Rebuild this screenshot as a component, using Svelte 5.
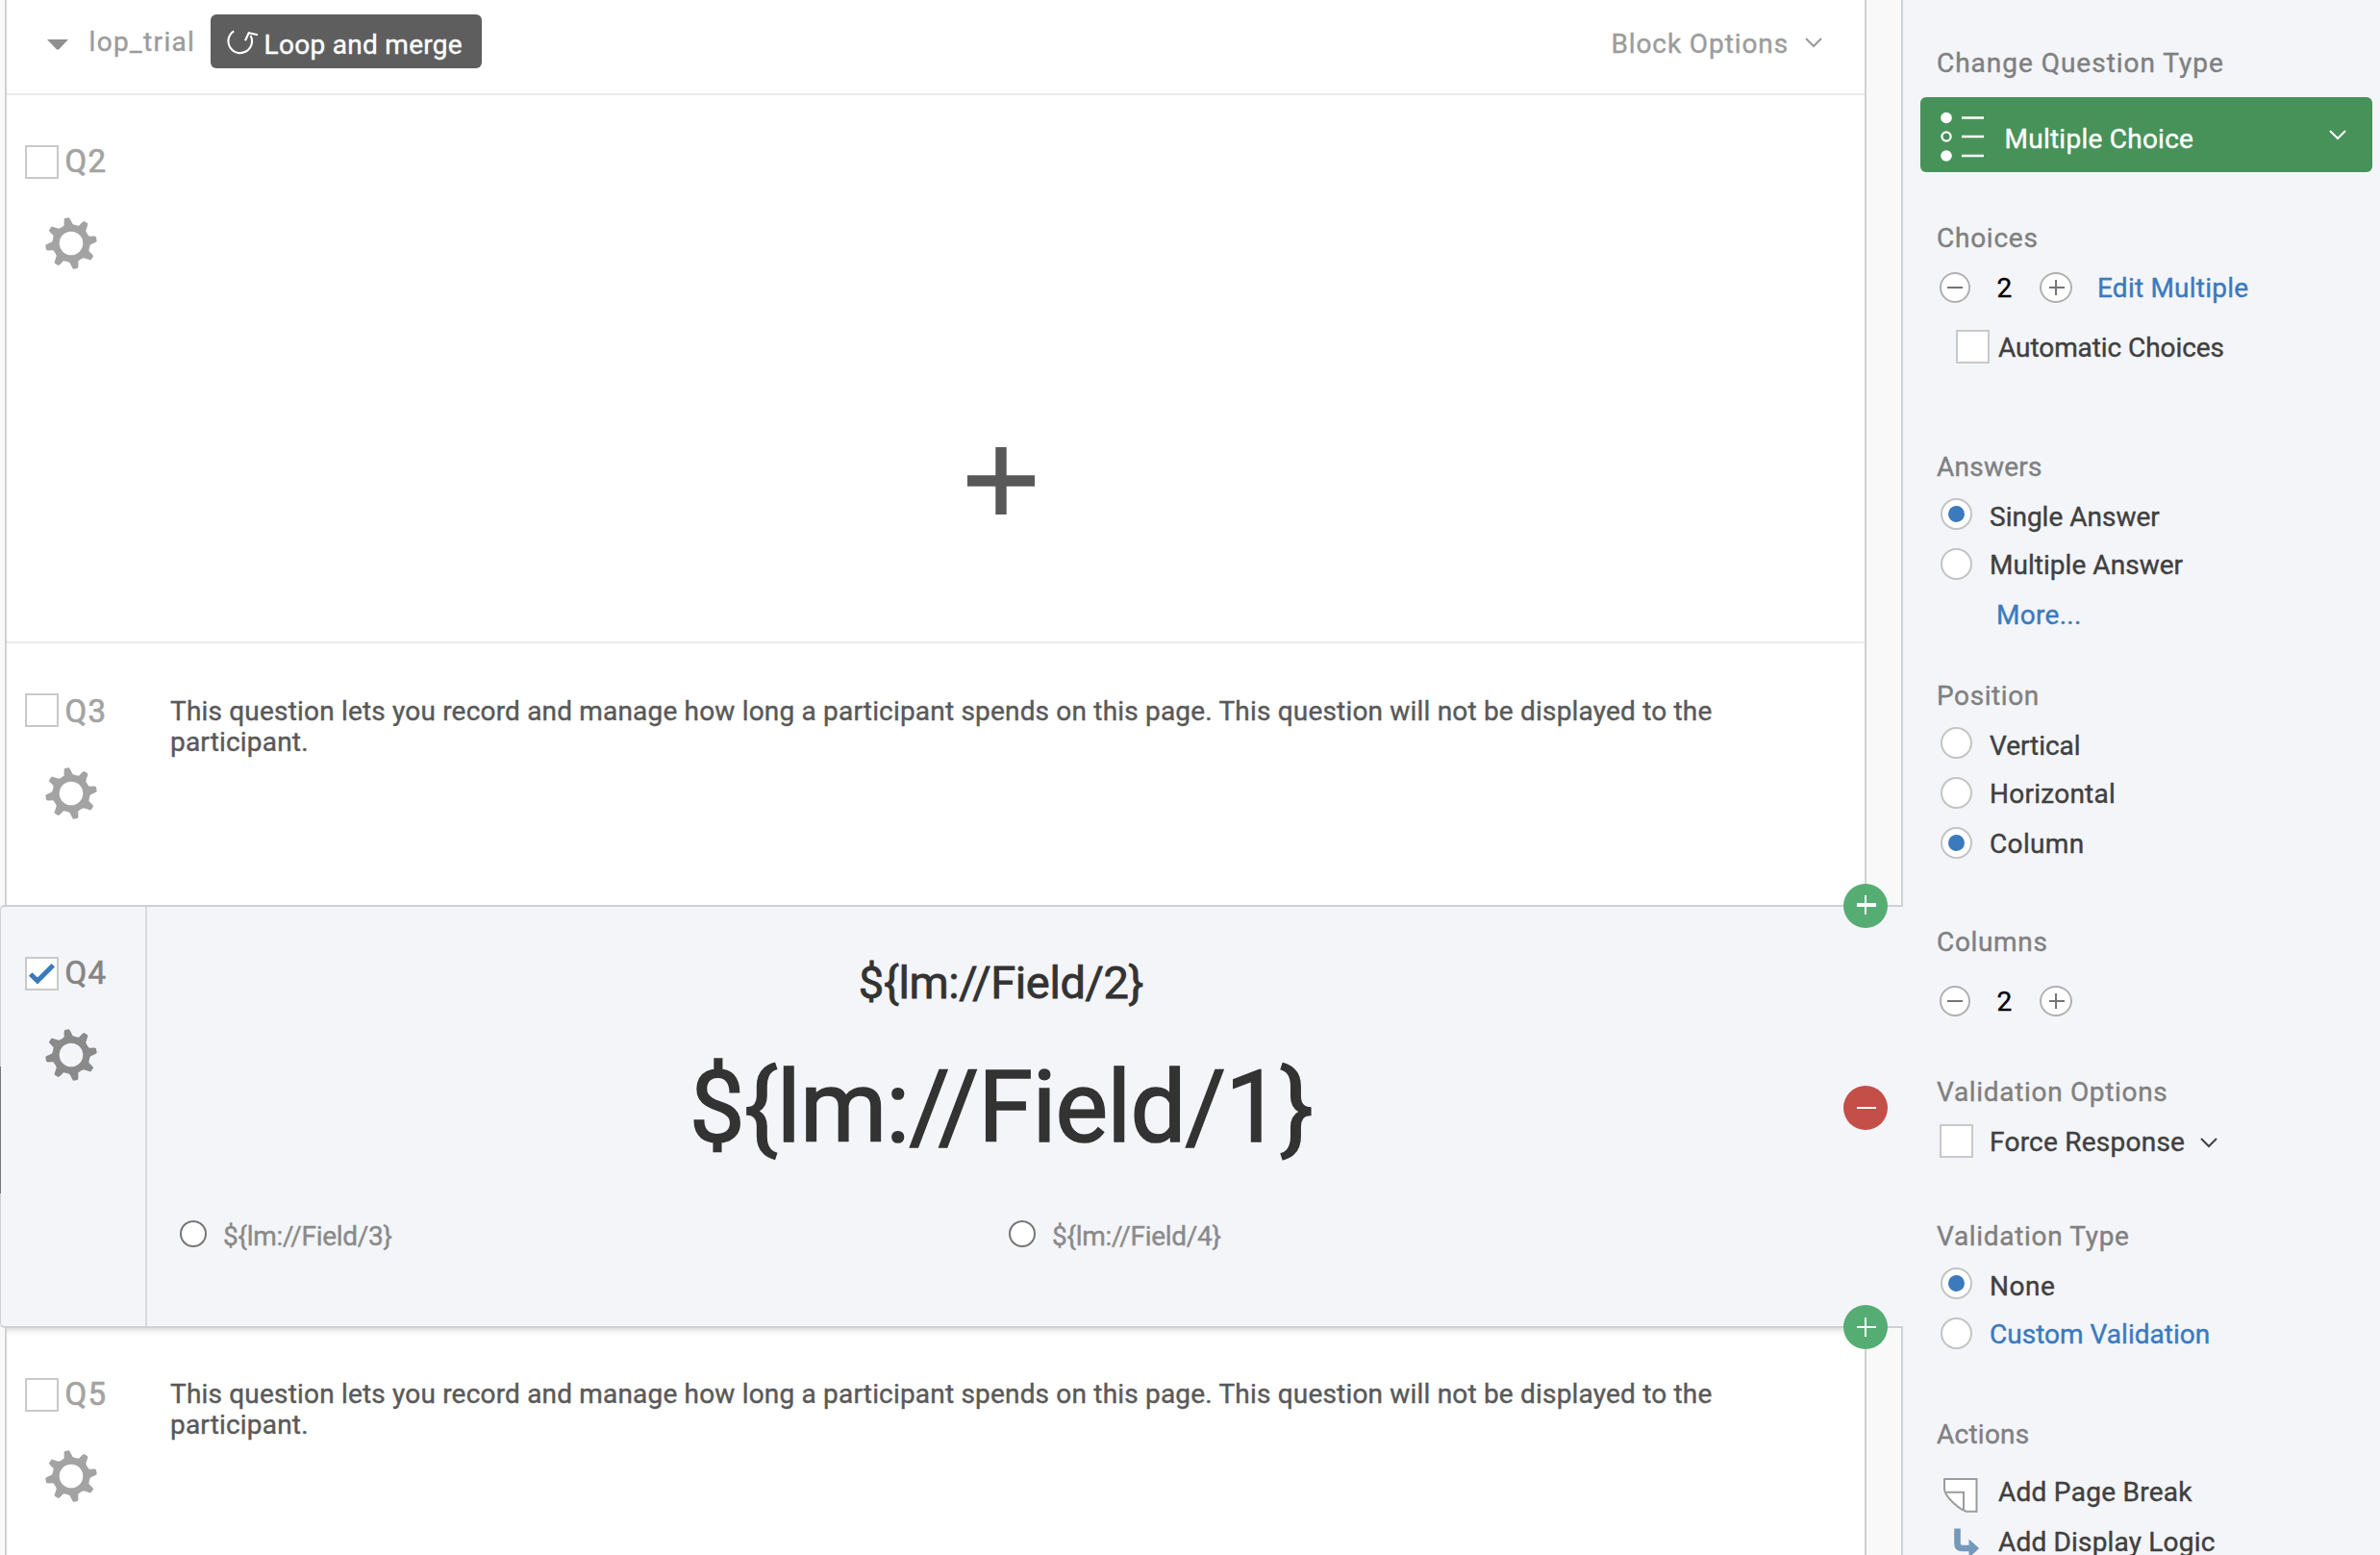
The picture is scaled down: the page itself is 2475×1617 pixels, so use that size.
<script>
  const timing =
    'This question lets you record and manage how long a participant spends on this page. This question will not be displayed to the participant.';

  const field = (n) => '${lm://Field/' + n + '}';

  // Eight-toothed cog outline, centred on the origin.
  function cog(outer, root) {
    const pts = [];
    const at = (r, deg) => {
      const a = ((deg - 90) * Math.PI) / 180;
      pts.push(`${(r * Math.cos(a)).toFixed(2)} ${(r * Math.sin(a)).toFixed(2)}`);
    };
    for (let i = 0; i < 8; i++) {
      const mid = -9.5 + i * 45;
      at(root, mid - 12);
      at(outer - 1.5, mid - 7.5);
      at(outer, mid - 5);
      at(outer, mid + 5);
      at(outer - 1.5, mid + 7);
      at(root, mid + 14);
      at(root - 0.6, mid + 22);
    }
    return `M${pts.join('L')}Z`;
  }
  const cogPath = cog(26.8, 20) + 'M12.3 0A12.3 12.3 0 1 0 -12.3 0A12.3 12.3 0 1 0 12.3 0Z';

  const answers = [
    { label: 'Single Answer', on: true, track: 0 },
    { label: 'Multiple Answer', on: false, track: 0.04 }
  ];
  const positions = [
    { label: 'Vertical', on: false, track: -0.05 },
    { label: 'Horizontal', on: false, track: 0.25 },
    { label: 'Column', on: true, track: 0.35 }
  ];
  const validation = [
    { label: 'None', on: true, track: 0.5 },
    { label: 'Custom Validation', on: false, track: 0.02, link: true }
  ];
</script>

{#snippet check(on)}
  <span class="check">
    {#if on}
      <svg width="31" height="31" viewBox="2 2 31 31"><path d="M5.7 18L13 25L29.3 8.7" fill="none" stroke="#3a7abd" stroke-width="5" /></svg>
    {/if}
  </span>
{/snippet}

{#snippet side(id, on)}
  <div class="side">
    <div class="pick">{@render check(on)}<span class="qid">{id}</span></div>
    <svg class="cog" width="54" height="54" viewBox="-27 -27 54 54"><path d={cogPath} fill-rule="evenodd" /></svg>
  </div>
{/snippet}

{#snippet chevron(color)}
  <svg class="chevron" width="18" height="11" viewBox="0 0 18 11"><path d="M1 1L9 9L17 1" fill="none" stroke={color} stroke-width="2" /></svg>
{/snippet}

{#snippet heading(text, track)}
  <h3 style:letter-spacing="{track}px">{text}</h3>
{/snippet}

{#snippet radios(items)}
  <div class="radios">
    {#each items as item}
      <label class="radio-row">
        <span class="radio" class:on={item.on}></span>
        <span class="radio-label" class:link={item.link} style:letter-spacing="{item.track}px">{item.label}</span>
      </label>
    {/each}
  </div>
{/snippet}

{#snippet stepper()}
  <span class="step minus"><svg width="16" height="16" viewBox="0 0 16 16"><path d="M0 7H16" stroke="#757575" stroke-width="2" /></svg></span>
  <span class="count">2</span>
  <span class="step plus"><svg width="16" height="16" viewBox="0 0 16 16"><path d="M0 7H16M7 -1V15" stroke="#757575" stroke-width="2" /></svg></span>
{/snippet}

<div class="page">
  <main>
    <div class="row head-row">
      <header class="sheet">
        <svg class="tri" width="22" height="11" viewBox="0 0 22 11"><path d="M0 0H22L12.5 10Q11 11 9.5 10Z" fill="#8f8f8f" /></svg>
        <span class="block-name">lop_trial</span>
        <button class="loop">
          <svg width="36" height="32" viewBox="0 0 36 32"><path d="M9.3 4.3A12.3 12.3 0 1 0 26.6 9M21 14.3L24.7 6.3L34 8.2" fill="none" stroke="#fff" stroke-width="2.1" /></svg>
          <span>Loop and merge</span>
        </button>
        <span class="options">Block Options</span>
        {@render chevron('#999')}
      </header>
    </div>

    <div class="row q2">
      <section class="sheet lined">
        {@render side('Q2', false)}
        <div class="fixation">
          <svg width="70" height="70" viewBox="0 0 70 70"><path d="M0 35H70M35 0V70" stroke="#585858" stroke-width="11.4" /></svg>
        </div>
      </section>
    </div>

    <div class="row q3">
      <section class="sheet">
        {@render side('Q3', false)}
        <p>{timing}</p>
      </section>
    </div>

    <section class="selected">
      {@render side('Q4', true)}
      <div class="body">
        <div class="field-two">{field(2)}</div>
        <div class="field-one">{field(1)}</div>
        <div class="choices">
          {#each [3, 4] as n}
            <div class="choice"><span class="dot"></span>{field(n)}</div>
          {/each}
        </div>
      </div>
      <span class="scroll-mark"></span>
      <span class="badge add top"><svg width="20" height="20" viewBox="0 0 20 20"><path d="M0 9H20" stroke="#fff" stroke-width="4" /><path d="M9 -1V19" stroke="#fff" stroke-width="2" /></svg></span>
      <span class="badge remove"><svg width="20" height="20" viewBox="0 0 20 20"><path d="M0 10H20" stroke="#fff" stroke-width="2" /></svg></span>
      <span class="badge add bottom"><svg width="20" height="20" viewBox="0 0 20 20"><path d="M0 10H20M9 0V20" stroke="#fff" stroke-width="2" /></svg></span>
    </section>

    <div class="row q5">
      <section class="sheet">
        {@render side('Q5', false)}
        <p>{timing}</p>
      </section>
    </div>
  </main>

  <aside class="panel">
    {@render heading('Change Question Type', 0.98)}
    <button class="type">
      <svg width="40" height="54" viewBox="0 0 40 54">
        <circle cx="7" cy="7.5" r="5.8" fill="#fff" />
        <circle cx="7" cy="27" r="4.6" fill="none" stroke="#fff" stroke-width="2.2" />
        <circle cx="7" cy="47" r="5.8" fill="#fff" />
        <path d="M23 7.5H46M23 27H46M23 47H46" stroke="#fff" stroke-width="2.4" />
      </svg>
      <span>Multiple Choice</span>
      {@render chevron('#fff')}
    </button>

    <div class="group choices-group">
      {@render heading('Choices', 0.75)}
      <div class="steps">{@render stepper()}<a class="link" href="#edit">Edit Multiple</a></div>
      <div class="auto">{@render check(false)}<span>Automatic Choices</span></div>
    </div>

    <div class="group answers">
      {@render heading('Answers', 0.25)}
      {@render radios(answers)}
      <a class="link more" href="#more">More...</a>
    </div>

    <div class="group position">
      {@render heading('Position', 0.6)}
      {@render radios(positions)}
    </div>

    <div class="group columns">
      {@render heading('Columns', 0.67)}
      <div class="steps">{@render stepper()}</div>
    </div>

    <div class="group v-options">
      {@render heading('Validation Options', 0.68)}
      <div class="force">{@render check(false)}<span>Force Response</span>{@render chevron('#404040')}</div>
    </div>

    <div class="group v-type">
      {@render heading('Validation Type', 0.68)}
      {@render radios(validation)}
    </div>

    <div class="group actions">
      {@render heading('Actions', 0.25)}
      <div class="action">
        <svg width="36" height="36" viewBox="0 0 36 36"><path d="M1 1H34.5V34.7H24C16 32.5 1 19 1 11Z" fill="#fff" stroke="#9c9c9c" stroke-width="2" /><path d="M2.5 14.7H21V33.5" fill="none" stroke="#9c9c9c" stroke-width="2" /></svg>
        <span>Add Page Break</span>
      </div>
      <div class="action">
        <svg class="logic" width="28" height="32" viewBox="0 0 28 32"><path d="M4.5 .5V16Q4.5 21 9.5 21H18" fill="none" stroke="#7499bb" stroke-width="6.6" /><path d="M16.5 11.5L27.2 21L16.5 31Z" fill="#7499bb" /></svg>
        <span>Add Display Logic</span>
      </div>
    </div>
  </aside>
</div>

<style>
  :global(body) { margin: 0; overflow: hidden; }
  .page {
    display: grid;
    grid-template-columns: 1979px 1fr;
    width: 2475px;
    height: 1617px;
    overflow: hidden;
    font: 28px/33px Roboto, sans-serif;
    -webkit-text-stroke: 0.4px currentColor;
    color: #404040;
    background: #f4f5f9;
  }
  svg { display: block; flex: none; overflow: visible; }
  button { border: 0; font: inherit; color: #fff; padding: 0; }
  h3, p { margin: 0; font-weight: 400; }
  .link { color: #3a7abd; text-decoration: none; }

  main { display: flex; flex-direction: column; height: 1617px; }
  .row {
    box-sizing: border-box;
    flex: none;
    display: flex;
    padding-left: 5px;
    border-right: 2px solid #cdd0d5;
    background: #f9f9f9;
  }
  .sheet {
    box-sizing: border-box;
    display: flex;
    width: 1936px;
    border: solid #d1d1d1;
    border-width: 0 2px;
    background: #fff;
  }
  .head-row { height: 99px; }
  .head-row .sheet { padding: 0 44px 0 42px; box-shadow: inset 0 -2px #ebebeb; color: #9c9c9c; }
  .tri { margin-top: 41px; }
  .block-name { margin: 27px 0 0 21.5px; letter-spacing: 1.35px; width: 126.5px; }
  .loop {
    display: flex;
    box-sizing: border-box;
    width: 282px;
    height: 56px;
    margin-top: 15px;
    padding-left: 15px;
    border-radius: 6px;
    background: #5e5e5e;
    letter-spacing: 0.3px;
  }
  .loop svg { margin-top: 13px; }
  .loop span { margin: 15px 0 0 4.5px; }
  .options { margin: 29px 0 0 auto; letter-spacing: 0.9px; }
  .head-row .sheet :global(.chevron) { margin: 39px 0 0 17px; }

  .q2 { height: 570px; }
  .q3 { height: 272px; }
  .q5 { flex: 1; }
  .lined { box-shadow: inset 0 -2px #ebebeb; }
  .side { flex: none; width: 125px; padding: 50px 0 0 19px; }
  .q3 .side { padding-top: 52px; }
  .pick { display: flex; height: 38px; }
  .check {
    box-sizing: border-box;
    flex: none;
    width: 35px;
    height: 35px;
    border: 2px solid #c9c9c9;
    background: #fff;
  }
  .pick .check { margin-top: 2px; }
  .q3 .pick .check { margin-top: 0; }
  .qid { margin-left: 6.5px; font-size: 33px; line-height: 38px; letter-spacing: 1.4px; color: #a3a3a3; -webkit-text-stroke-width: 0.7px; }
  .cog { margin: 39px 0 0 20.5px; fill: #a3a3a3; }
  .fixation { display: flex; justify-content: center; width: 1776px; padding: 366px 0 0 2px; }
  .sheet p { margin: 55px 0 0 26px; width: 1625px; line-height: 32px; letter-spacing: 0.185px; color: #595959; }
  .q5 .sheet p { margin-top: 53px; }
  .q5 .sheet { box-shadow: inset 0 8px 8px -8px rgba(0, 0, 0, 0.25); }

  .selected {
    position: relative;
    box-sizing: border-box;
    flex: none;
    display: flex;
    height: 440px;
    border: solid #cdd0d4;
    border-width: 2px 0 2px 1px;
    border-radius: 5px 0 0 5px;
  }
  .selected .side { padding-left: 25px; border-right: 2px solid #d9d9d9; }
  .selected .qid { color: #858585; }
  .selected .cog { fill: #8a8a8a; }
  .body { width: 1776px; color: #333; text-align: center; }
  .field-two { margin-top: 51px; font-size: 47px; line-height: 56px; letter-spacing: -0.38px; -webkit-text-stroke-width: 0.8px; }
  .field-one { margin-top: 41px; font-size: 103px; line-height: 121px; letter-spacing: -0.9px; -webkit-text-stroke-width: 1.6px; }
  .choices { display: flex; margin-top: 57px; padding-left: 34px; color: #8a8a8a; }
  .choice { display: flex; width: 862px; letter-spacing: -0.28px; }
  .dot {
    box-sizing: border-box;
    width: 28px;
    height: 28px;
    margin-right: 17px;
    border: 2px solid #757575;
    border-radius: 50%;
    background: #fff;
  }
  .scroll-mark { position: absolute; left: -1px; top: 166px; width: 1px; height: 132px; background: #777; }
  .badge {
    position: absolute;
    z-index: 2;
    box-sizing: border-box;
    left: 1916px;
    width: 46px;
    height: 46px;
    padding: 13px 14px;
    border-radius: 50%;
  }
  .add { background: #55ad74; }
  .remove { top: 186px; background: #c44e48; }
  .top { top: -24px; }
  .bottom { top: 414px; }

  .panel { padding: 49px 0 0 35px; }
  h3 { font-size: 28px; color: #808080; }
  .type {
    display: flex;
    box-sizing: border-box;
    width: 470px;
    height: 78px;
    margin: 19px 0 0 -17px;
    padding-left: 20px;
    border-radius: 6px;
    background: #479259;
    letter-spacing: 0.25px;
  }
  .type svg:first-child { margin-top: 14px; }
  .type span { margin: 27px 0 0 27.5px; }
  .type :global(.chevron) { margin: 34px 27px 0 auto; }
  .group { display: flex; flex-direction: column; }
  .choices-group { margin-top: 52px; }
  .answers { margin-top: 90px; }
  .position, .columns { margin-top: 51px; }
  .v-options { margin-top: 61px; }
  .v-type { margin-top: 64px; }
  .actions { margin-top: 53px; }
  .actions h3 { margin-bottom: 27px; }

  .steps { display: flex; height: 33px; margin-top: 19px; padding-left: 3px; }
  .columns .steps { margin-top: 29px; }
  .step {
    display: flex;
    box-sizing: border-box;
    height: 32px;
    padding: 7px 0 0 6px;
    border: 2px solid #b0b0b0;
    border-radius: 50%;
    background: #fff;
  }
  .minus { width: 32px; }
  .plus { width: 34px; padding-left: 8px; }
  .count { box-sizing: border-box; width: 72px; padding-left: 27.5px; color: #000; }
  .steps .link { margin-left: 26px; letter-spacing: 0.22px; }
  .auto, .force { display: flex; height: 36px; }
  .auto { margin-top: 27px; padding-left: 20px; }
  .auto span:last-child { margin: 2px 0 0 9px; letter-spacing: -0.07px; }
  .force { margin-top: 17px; padding-left: 2.5px; }
  .force > span:nth-child(2) { margin: 2px 0 0 17.5px; letter-spacing: 0.24px; }
  .force :global(.chevron) { margin: 14px 0 0 16px; }

  .radios { margin-top: 16px; padding-left: 4px; }
  .radio-row { display: flex; height: 52px; }
  .radio {
    display: grid;
    place-items: center;
    box-sizing: border-box;
    width: 33px;
    height: 33px;
    border: 2px solid #c4c4c4;
    border-radius: 50%;
    background: #fff;
  }
  .radio.on::after { content: ''; width: 17px; height: 17px; border-radius: 50%; background: #3a7abd; }
  .radio-label { margin: 1px 0 0 18px; }
  .radio-row:first-child .radio-label { margin-top: 3px; }
  .more { margin: 1px 0 0 62px; letter-spacing: 0.3px; }
  .action { display: flex; height: 52px; flex: none; }
  .action svg { margin: 2px 0 0 7px; }
  .action span { margin-left: 21px; letter-spacing: 0.27px; }
  .action svg.logic { margin: 2px 0 0 17px; }
  .action .logic + span { margin-left: 19px; letter-spacing: 0.18px; }
</style>
